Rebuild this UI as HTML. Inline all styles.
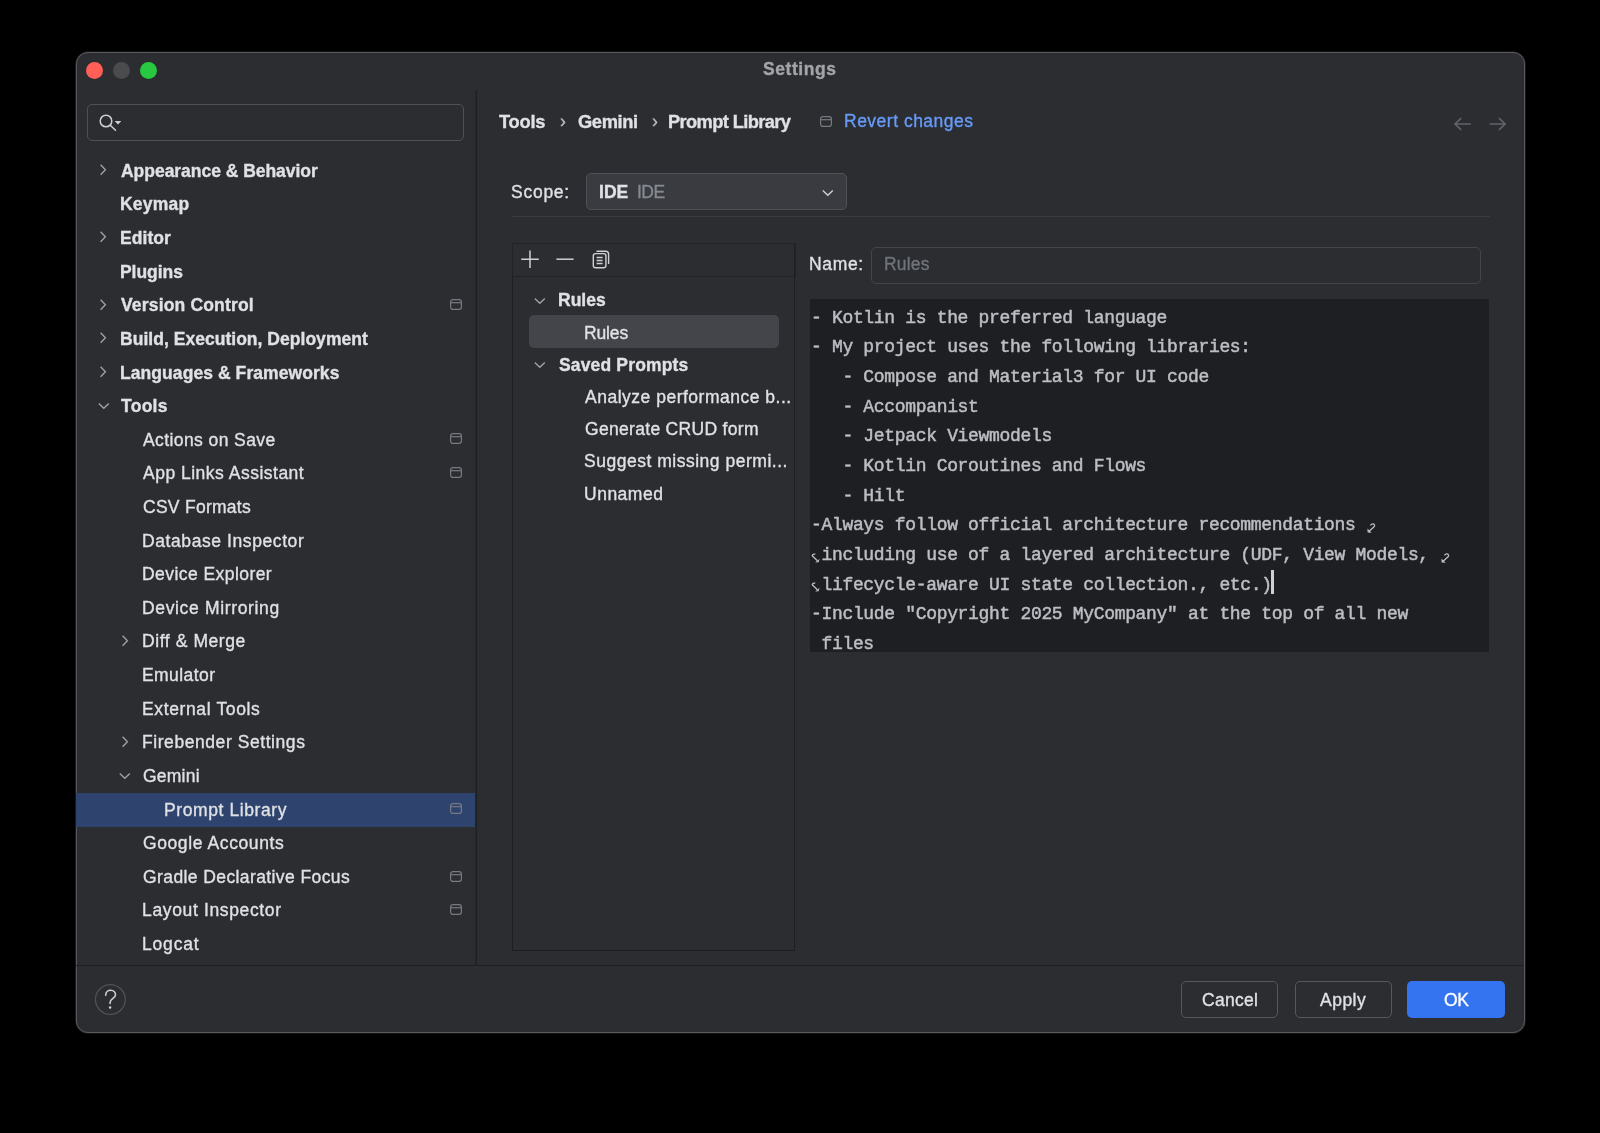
<!DOCTYPE html>
<html><head><meta charset="utf-8"><title>Settings</title>
<style>
html,body{margin:0;padding:0;}
body{width:1600px;height:1133px;background:#000;position:relative;overflow:hidden;font-family:'Liberation Sans', sans-serif;}
.b{position:absolute;box-sizing:border-box;}
.t{position:absolute;white-space:pre;-webkit-text-stroke:0.35px currentColor;will-change:transform;}
</style></head><body>

<div class="b" style="left:76px;top:52px;width:1449px;height:981px;background:#2B2D30;border:1px solid #58595C;border-radius:12px;box-shadow:0 0 0 0.6px rgba(88,89,92,0.45);"></div>
<div class="b" style="left:86.0px;top:61.5px;width:17px;height:17px;border-radius:50%;background:#FF5F57;"></div>
<div class="b" style="left:113.0px;top:61.5px;width:17px;height:17px;border-radius:50%;background:#4A4B4D;"></div>
<div class="b" style="left:140.0px;top:61.5px;width:17px;height:17px;border-radius:50%;background:#28C840;"></div>
<div class="t" style="left:763.00px;top:60.69px;font-size:17.5px;line-height:17.5px;font-weight:bold;color:#A3A4A7;letter-spacing:0.559px;font-family:'Liberation Sans', sans-serif;">Settings</div>
<div class="b" style="left:475px;top:90px;width:1px;height:875px;background:#26272A;"></div>
<div class="b" style="left:476px;top:90px;width:1px;height:875px;background:#1E1F22;"></div>
<div class="b" style="left:76px;top:965px;width:1448px;height:1px;background:#1E1F22;"></div>
<div class="b" style="left:87px;top:104px;width:377px;height:37px;border:1px solid #4E5157;border-radius:5px;"></div>
<svg class="b" style="left:96px;top:110px" width="30" height="24" viewBox="0 0 30 24"><circle cx="10" cy="11" r="5.8" fill="none" stroke="#CED0D6" stroke-width="1.5"/><line x1="14.2" y1="15.2" x2="19.5" y2="20.3" stroke="#CED0D6" stroke-width="1.5" stroke-linecap="round"/><path d="M18.7 11 L25.3 11 L22 14.4 Z" fill="#CED0D6"/></svg>
<svg class="b" style="left:96.7px;top:164.2px" width="12" height="12" viewBox="0 0 12 12"><path d="M3.6 0.8 L8.4 5.8 L3.6 10.8" fill="none" stroke="#9DA0A8" stroke-width="1.4"/></svg>
<div class="t" style="left:121.00px;top:162.79px;font-size:17.5px;line-height:17.5px;font-weight:bold;color:#DFE1E5;letter-spacing:-0.030px;font-family:'Liberation Sans', sans-serif;">Appearance &amp; Behavior</div>
<div class="t" style="left:120.00px;top:196.41px;font-size:17.5px;line-height:17.5px;font-weight:bold;color:#DFE1E5;letter-spacing:0.230px;font-family:'Liberation Sans', sans-serif;">Keymap</div>
<svg class="b" style="left:96.7px;top:231.43999999999997px" width="12" height="12" viewBox="0 0 12 12"><path d="M3.6 0.8 L8.4 5.8 L3.6 10.8" fill="none" stroke="#9DA0A8" stroke-width="1.4"/></svg>
<div class="t" style="left:120.00px;top:230.03px;font-size:17.5px;line-height:17.5px;font-weight:bold;color:#DFE1E5;letter-spacing:0.070px;font-family:'Liberation Sans', sans-serif;">Editor</div>
<div class="t" style="left:120.00px;top:263.65px;font-size:17.5px;line-height:17.5px;font-weight:bold;color:#DFE1E5;letter-spacing:-0.054px;font-family:'Liberation Sans', sans-serif;">Plugins</div>
<svg class="b" style="left:96.7px;top:298.68px" width="12" height="12" viewBox="0 0 12 12"><path d="M3.6 0.8 L8.4 5.8 L3.6 10.8" fill="none" stroke="#9DA0A8" stroke-width="1.4"/></svg>
<div class="t" style="left:121.00px;top:297.27px;font-size:17.5px;line-height:17.5px;font-weight:bold;color:#DFE1E5;letter-spacing:0.167px;font-family:'Liberation Sans', sans-serif;">Version Control</div>
<svg class="b" style="left:449.00px;top:297.98px" width="14" height="14" viewBox="0 0 14 14"><rect x="1.6" y="1.6" width="10.8" height="9.8" rx="2.3" fill="none" stroke="#767A81" stroke-width="1.2"/><line x1="1.6" y1="4.7" x2="12.4" y2="4.7" stroke="#767A81" stroke-width="1.2"/></svg>
<svg class="b" style="left:96.7px;top:332.3px" width="12" height="12" viewBox="0 0 12 12"><path d="M3.6 0.8 L8.4 5.8 L3.6 10.8" fill="none" stroke="#9DA0A8" stroke-width="1.4"/></svg>
<div class="t" style="left:120.00px;top:330.89px;font-size:17.5px;line-height:17.5px;font-weight:bold;color:#DFE1E5;letter-spacing:0.030px;font-family:'Liberation Sans', sans-serif;">Build, Execution, Deployment</div>
<svg class="b" style="left:96.7px;top:365.91999999999996px" width="12" height="12" viewBox="0 0 12 12"><path d="M3.6 0.8 L8.4 5.8 L3.6 10.8" fill="none" stroke="#9DA0A8" stroke-width="1.4"/></svg>
<div class="t" style="left:120.00px;top:364.51px;font-size:17.5px;line-height:17.5px;font-weight:bold;color:#DFE1E5;letter-spacing:0.073px;font-family:'Liberation Sans', sans-serif;">Languages &amp; Frameworks</div>
<svg class="b" style="left:97.5px;top:400.43999999999994px" width="12" height="12" viewBox="0 0 12 12"><path d="M0.8 3.4 L5.8 8.2 L10.8 3.4" fill="none" stroke="#9DA0A8" stroke-width="1.4"/></svg>
<div class="t" style="left:121.00px;top:398.13px;font-size:17.5px;line-height:17.5px;font-weight:bold;color:#DFE1E5;letter-spacing:0.280px;font-family:'Liberation Sans', sans-serif;">Tools</div>
<div class="t" style="left:143.00px;top:431.75px;font-size:17.5px;line-height:17.5px;font-weight:normal;color:#DFE1E5;letter-spacing:0.413px;font-family:'Liberation Sans', sans-serif;">Actions on Save</div>
<svg class="b" style="left:449.00px;top:432.46px" width="14" height="14" viewBox="0 0 14 14"><rect x="1.6" y="1.6" width="10.8" height="9.8" rx="2.3" fill="none" stroke="#767A81" stroke-width="1.2"/><line x1="1.6" y1="4.7" x2="12.4" y2="4.7" stroke="#767A81" stroke-width="1.2"/></svg>
<div class="t" style="left:143.40px;top:465.37px;font-size:17.5px;line-height:17.5px;font-weight:normal;color:#DFE1E5;letter-spacing:0.498px;font-family:'Liberation Sans', sans-serif;">App Links Assistant</div>
<svg class="b" style="left:449.00px;top:466.08px" width="14" height="14" viewBox="0 0 14 14"><rect x="1.6" y="1.6" width="10.8" height="9.8" rx="2.3" fill="none" stroke="#767A81" stroke-width="1.2"/><line x1="1.6" y1="4.7" x2="12.4" y2="4.7" stroke="#767A81" stroke-width="1.2"/></svg>
<div class="t" style="left:143.00px;top:498.99px;font-size:17.5px;line-height:17.5px;font-weight:normal;color:#DFE1E5;letter-spacing:0.270px;font-family:'Liberation Sans', sans-serif;">CSV Formats</div>
<div class="t" style="left:142.40px;top:532.61px;font-size:17.5px;line-height:17.5px;font-weight:normal;color:#DFE1E5;letter-spacing:0.589px;font-family:'Liberation Sans', sans-serif;">Database Inspector</div>
<div class="t" style="left:142.40px;top:566.23px;font-size:17.5px;line-height:17.5px;font-weight:normal;color:#DFE1E5;letter-spacing:0.441px;font-family:'Liberation Sans', sans-serif;">Device Explorer</div>
<div class="t" style="left:142.00px;top:599.85px;font-size:17.5px;line-height:17.5px;font-weight:normal;color:#DFE1E5;letter-spacing:0.654px;font-family:'Liberation Sans', sans-serif;">Device Mirroring</div>
<svg class="b" style="left:118.50000000000001px;top:634.88px" width="12" height="12" viewBox="0 0 12 12"><path d="M3.6 0.8 L8.4 5.8 L3.6 10.8" fill="none" stroke="#9DA0A8" stroke-width="1.4"/></svg>
<div class="t" style="left:142.40px;top:633.47px;font-size:17.5px;line-height:17.5px;font-weight:normal;color:#DFE1E5;letter-spacing:0.581px;font-family:'Liberation Sans', sans-serif;">Diff &amp; Merge</div>
<div class="t" style="left:142.00px;top:667.09px;font-size:17.5px;line-height:17.5px;font-weight:normal;color:#DFE1E5;letter-spacing:0.420px;font-family:'Liberation Sans', sans-serif;">Emulator</div>
<div class="t" style="left:142.00px;top:700.71px;font-size:17.5px;line-height:17.5px;font-weight:normal;color:#DFE1E5;letter-spacing:0.632px;font-family:'Liberation Sans', sans-serif;">External Tools</div>
<svg class="b" style="left:118.50000000000001px;top:735.74px" width="12" height="12" viewBox="0 0 12 12"><path d="M3.6 0.8 L8.4 5.8 L3.6 10.8" fill="none" stroke="#9DA0A8" stroke-width="1.4"/></svg>
<div class="t" style="left:142.40px;top:734.33px;font-size:17.5px;line-height:17.5px;font-weight:normal;color:#DFE1E5;letter-spacing:0.564px;font-family:'Liberation Sans', sans-serif;">Firebender Settings</div>
<svg class="b" style="left:119.30000000000001px;top:770.26px" width="12" height="12" viewBox="0 0 12 12"><path d="M0.8 3.4 L5.8 8.2 L10.8 3.4" fill="none" stroke="#9DA0A8" stroke-width="1.4"/></svg>
<div class="t" style="left:143.00px;top:767.95px;font-size:17.5px;line-height:17.5px;font-weight:normal;color:#DFE1E5;letter-spacing:0.220px;font-family:'Liberation Sans', sans-serif;">Gemini</div>
<div class="b" style="left:76px;top:793px;width:399px;height:34px;background:#2E436E;"></div>
<div class="t" style="left:164.00px;top:801.57px;font-size:17.5px;line-height:17.5px;font-weight:normal;color:#DFE1E5;letter-spacing:0.592px;font-family:'Liberation Sans', sans-serif;">Prompt Library</div>
<svg class="b" style="left:449.00px;top:802.28px" width="14" height="14" viewBox="0 0 14 14"><rect x="1.6" y="1.6" width="10.8" height="9.8" rx="2.3" fill="none" stroke="#767A81" stroke-width="1.2"/><line x1="1.6" y1="4.7" x2="12.4" y2="4.7" stroke="#767A81" stroke-width="1.2"/></svg>
<div class="t" style="left:143.40px;top:835.19px;font-size:17.5px;line-height:17.5px;font-weight:normal;color:#DFE1E5;letter-spacing:0.598px;font-family:'Liberation Sans', sans-serif;">Google Accounts</div>
<div class="t" style="left:143.00px;top:868.81px;font-size:17.5px;line-height:17.5px;font-weight:normal;color:#DFE1E5;letter-spacing:0.402px;font-family:'Liberation Sans', sans-serif;">Gradle Declarative Focus</div>
<svg class="b" style="left:449.00px;top:869.52px" width="14" height="14" viewBox="0 0 14 14"><rect x="1.6" y="1.6" width="10.8" height="9.8" rx="2.3" fill="none" stroke="#767A81" stroke-width="1.2"/><line x1="1.6" y1="4.7" x2="12.4" y2="4.7" stroke="#767A81" stroke-width="1.2"/></svg>
<div class="t" style="left:142.00px;top:902.43px;font-size:17.5px;line-height:17.5px;font-weight:normal;color:#DFE1E5;letter-spacing:0.645px;font-family:'Liberation Sans', sans-serif;">Layout Inspector</div>
<svg class="b" style="left:449.00px;top:903.14px" width="14" height="14" viewBox="0 0 14 14"><rect x="1.6" y="1.6" width="10.8" height="9.8" rx="2.3" fill="none" stroke="#767A81" stroke-width="1.2"/><line x1="1.6" y1="4.7" x2="12.4" y2="4.7" stroke="#767A81" stroke-width="1.2"/></svg>
<div class="t" style="left:142.00px;top:936.05px;font-size:17.5px;line-height:17.5px;font-weight:normal;color:#DFE1E5;letter-spacing:0.820px;font-family:'Liberation Sans', sans-serif;">Logcat</div>
<div class="t" style="left:499.00px;top:112.91px;font-size:18.3px;line-height:18.3px;font-weight:bold;color:#DFE1E5;letter-spacing:-0.220px;font-family:'Liberation Sans', sans-serif;">Tools</div>
<div class="t" style="left:560.00px;top:113.19px;font-size:17.5px;line-height:17.5px;font-weight:normal;color:#B8BBC0;letter-spacing:0.000px;font-family:'Liberation Sans', sans-serif;">›</div>
<div class="t" style="left:578.00px;top:112.91px;font-size:18.3px;line-height:18.3px;font-weight:bold;color:#DFE1E5;letter-spacing:-0.370px;font-family:'Liberation Sans', sans-serif;">Gemini</div>
<div class="t" style="left:652.00px;top:113.19px;font-size:17.5px;line-height:17.5px;font-weight:normal;color:#B8BBC0;letter-spacing:0.000px;font-family:'Liberation Sans', sans-serif;">›</div>
<div class="t" style="left:668.00px;top:112.91px;font-size:18.3px;line-height:18.3px;font-weight:bold;color:#DFE1E5;letter-spacing:-0.623px;font-family:'Liberation Sans', sans-serif;">Prompt Library</div>
<svg class="b" style="left:819.00px;top:114.80px" width="14" height="14" viewBox="0 0 14 14"><rect x="1.6" y="1.6" width="10.8" height="9.8" rx="2.3" fill="none" stroke="#767A81" stroke-width="1.2"/><line x1="1.6" y1="4.7" x2="12.4" y2="4.7" stroke="#767A81" stroke-width="1.2"/></svg>
<div class="t" style="left:844.00px;top:113.39px;font-size:17.5px;line-height:17.5px;font-weight:normal;color:#689AF8;letter-spacing:0.497px;font-family:'Liberation Sans', sans-serif;">Revert changes</div>
<svg class="b" style="left:1445px;top:108px" width="70" height="30" viewBox="0 0 70 30"><path d="M10 16 H25.8 M16.2 10.2 L10 16 L16.2 21.8" fill="none" stroke="#606369" stroke-width="1.6"/><path d="M44.6 16 H60.2 M54 10.2 L60.2 16 L54 21.8" fill="none" stroke="#606369" stroke-width="1.6"/></svg>
<div class="t" style="left:511.00px;top:183.79px;font-size:17.5px;line-height:17.5px;font-weight:normal;color:#DFE1E5;letter-spacing:0.740px;font-family:'Liberation Sans', sans-serif;">Scope:</div>
<div class="b" style="left:586px;top:172.5px;width:261px;height:37px;background:#393B40;border:1px solid #4E5157;border-radius:5px;"></div>
<div class="t" style="left:598.60px;top:183.79px;font-size:17.5px;line-height:17.5px;font-weight:bold;color:#DFE1E5;letter-spacing:0.050px;font-family:'Liberation Sans', sans-serif;">IDE</div>
<div class="t" style="left:637.00px;top:183.79px;font-size:17.5px;line-height:17.5px;font-weight:normal;color:#868A91;letter-spacing:-0.525px;font-family:'Liberation Sans', sans-serif;">IDE</div>
<svg class="b" style="left:822.2px;top:187px" width="12" height="12" viewBox="0 0 12 12"><path d="M0.8 3.4 L5.8 8.2 L10.8 3.4" fill="none" stroke="#CED0D6" stroke-width="1.4"/></svg>
<div class="b" style="left:512px;top:215.5px;width:978px;height:1px;background:#393B40;"></div>
<div class="b" style="left:512px;top:243px;width:283px;height:708px;border:1px solid #1E1F22;"></div>
<div class="b" style="left:512px;top:243px;width:284px;height:34px;border:1px solid #222326;"></div>
<svg class="b" style="left:518px;top:247px" width="100" height="25" viewBox="0 0 100 25"><path d="M12 3.5 V21 M3.2 12.2 H20.8" stroke="#CED0D6" stroke-width="1.5"/><path d="M38.4 12.2 H55.6" stroke="#CED0D6" stroke-width="1.5"/><rect x="75.3" y="6.6" width="12.6" height="14.2" rx="2.2" fill="none" stroke="#CED0D6" stroke-width="1.4"/><path d="M78.5 4.3 H87.6 Q90.6 4.3 90.6 7.3 V17" fill="none" stroke="#CED0D6" stroke-width="1.4"/><path d="M78.6 10.5 H84.6 M78.6 13.5 H84.6 M78.6 16.5 H84.6" stroke="#CED0D6" stroke-width="1.3"/></svg>
<svg class="b" style="left:534px;top:294.7px" width="12" height="12" viewBox="0 0 12 12"><path d="M0.8 3.4 L5.8 8.2 L10.8 3.4" fill="none" stroke="#9DA0A8" stroke-width="1.4"/></svg>
<div class="t" style="left:558.00px;top:292.39px;font-size:17.5px;line-height:17.5px;font-weight:bold;color:#DFE1E5;letter-spacing:0.005px;font-family:'Liberation Sans', sans-serif;">Rules</div>
<div class="b" style="left:529px;top:315px;width:249.5px;height:32.5px;background:#43454A;border-radius:5px;"></div>
<div class="t" style="left:584.00px;top:324.59px;font-size:17.5px;line-height:17.5px;font-weight:normal;color:#DFE1E5;letter-spacing:-0.130px;font-family:'Liberation Sans', sans-serif;">Rules</div>
<svg class="b" style="left:534px;top:359.1px" width="12" height="12" viewBox="0 0 12 12"><path d="M0.8 3.4 L5.8 8.2 L10.8 3.4" fill="none" stroke="#9DA0A8" stroke-width="1.4"/></svg>
<div class="t" style="left:559.00px;top:356.79px;font-size:17.5px;line-height:17.5px;font-weight:bold;color:#DFE1E5;letter-spacing:0.155px;font-family:'Liberation Sans', sans-serif;">Saved Prompts</div>
<div class="t" style="left:585.00px;top:388.99px;font-size:17.5px;line-height:17.5px;font-weight:normal;color:#DFE1E5;letter-spacing:0.507px;font-family:'Liberation Sans', sans-serif;">Analyze performance b...</div>
<div class="t" style="left:585.00px;top:421.19px;font-size:17.5px;line-height:17.5px;font-weight:normal;color:#DFE1E5;letter-spacing:0.307px;font-family:'Liberation Sans', sans-serif;">Generate CRUD form</div>
<div class="t" style="left:584.00px;top:453.39px;font-size:17.5px;line-height:17.5px;font-weight:normal;color:#DFE1E5;letter-spacing:0.513px;font-family:'Liberation Sans', sans-serif;">Suggest missing permi...</div>
<div class="t" style="left:584.00px;top:485.59px;font-size:17.5px;line-height:17.5px;font-weight:normal;color:#DFE1E5;letter-spacing:0.503px;font-family:'Liberation Sans', sans-serif;">Unnamed</div>
<div class="t" style="left:809.00px;top:256.49px;font-size:17.5px;line-height:17.5px;font-weight:normal;color:#DFE1E5;letter-spacing:0.670px;font-family:'Liberation Sans', sans-serif;">Name:</div>
<div class="b" style="left:871px;top:246.5px;width:610px;height:37.5px;border:1px solid #43454A;border-radius:5px;"></div>
<div class="t" style="left:883.50px;top:256.49px;font-size:17.5px;line-height:17.5px;font-weight:normal;color:#6F737A;letter-spacing:0.200px;font-family:'Liberation Sans', sans-serif;">Rules</div>
<div class="b" style="left:809.5px;top:299px;width:679.5px;height:352.5px;background:#1E1F22;"></div>
<div class="t" style="left:810.50px;top:308.80px;font-size:18px;line-height:18px;font-weight:normal;color:#BCBEC4;letter-spacing:-0.330px;font-family:'Liberation Mono', monospace;-webkit-text-stroke:0.5px #BCBEC4;">- Kotlin is the preferred language</div>
<div class="t" style="left:810.50px;top:338.44px;font-size:18px;line-height:18px;font-weight:normal;color:#BCBEC4;letter-spacing:-0.330px;font-family:'Liberation Mono', monospace;-webkit-text-stroke:0.5px #BCBEC4;">- My project uses the following libraries:</div>
<div class="t" style="left:810.50px;top:368.08px;font-size:18px;line-height:18px;font-weight:normal;color:#BCBEC4;letter-spacing:-0.330px;font-family:'Liberation Mono', monospace;-webkit-text-stroke:0.5px #BCBEC4;">   - Compose and Material3 for UI code</div>
<div class="t" style="left:810.50px;top:397.72px;font-size:18px;line-height:18px;font-weight:normal;color:#BCBEC4;letter-spacing:-0.330px;font-family:'Liberation Mono', monospace;-webkit-text-stroke:0.5px #BCBEC4;">   - Accompanist</div>
<div class="t" style="left:810.50px;top:427.36px;font-size:18px;line-height:18px;font-weight:normal;color:#BCBEC4;letter-spacing:-0.330px;font-family:'Liberation Mono', monospace;-webkit-text-stroke:0.5px #BCBEC4;">   - Jetpack Viewmodels</div>
<div class="t" style="left:810.50px;top:457.00px;font-size:18px;line-height:18px;font-weight:normal;color:#BCBEC4;letter-spacing:-0.330px;font-family:'Liberation Mono', monospace;-webkit-text-stroke:0.5px #BCBEC4;">   - Kotlin Coroutines and Flows</div>
<div class="t" style="left:810.50px;top:486.64px;font-size:18px;line-height:18px;font-weight:normal;color:#BCBEC4;letter-spacing:-0.330px;font-family:'Liberation Mono', monospace;-webkit-text-stroke:0.5px #BCBEC4;">   - Hilt</div>
<div class="t" style="left:810.50px;top:516.28px;font-size:18px;line-height:18px;font-weight:normal;color:#BCBEC4;letter-spacing:-0.330px;font-family:'Liberation Mono', monospace;-webkit-text-stroke:0.5px #BCBEC4;">-Always follow official architecture recommendations</div>
<div class="t" style="left:810.50px;top:545.92px;font-size:18px;line-height:18px;font-weight:normal;color:#BCBEC4;letter-spacing:-0.330px;font-family:'Liberation Mono', monospace;-webkit-text-stroke:0.5px #BCBEC4;"> including use of a layered architecture (UDF, View Models,</div>
<div class="t" style="left:810.50px;top:575.56px;font-size:18px;line-height:18px;font-weight:normal;color:#BCBEC4;letter-spacing:-0.330px;font-family:'Liberation Mono', monospace;-webkit-text-stroke:0.5px #BCBEC4;"> lifecycle-aware UI state collection., etc.)</div>
<div class="t" style="left:810.50px;top:605.20px;font-size:18px;line-height:18px;font-weight:normal;color:#BCBEC4;letter-spacing:-0.330px;font-family:'Liberation Mono', monospace;-webkit-text-stroke:0.5px #BCBEC4;">-Include "Copyright 2025 MyCompany" at the top of all new</div>
<div class="t" style="left:810.50px;top:634.84px;font-size:18px;line-height:18px;font-weight:normal;color:#BCBEC4;letter-spacing:-0.330px;font-family:'Liberation Mono', monospace;-webkit-text-stroke:0.5px #BCBEC4;"> files</div>
<svg class="b" style="left:1365.4px;top:522.1px" width="12" height="12" viewBox="0 0 12 12"><path d="M5.4 3.4 Q7 1.2 9 2.2 Q10.3 3.3 9.1 4.8 L3.8 9.6" fill="none" stroke="#BCBEC4" stroke-width="1.3"/><path d="M2.4 6.4 L2.6 10.6 L6.7 10.8 Z" fill="#BCBEC4"/></svg>
<svg class="b" style="left:810.5px;top:551.7px" width="12" height="12" viewBox="0 0 12 12"><path d="M4.3 2.2 Q1.6 1.6 1.2 3.8 L6.4 8.8" fill="none" stroke="#BCBEC4" stroke-width="1.3"/><path d="M7.6 10.3 L8.6 6.7 L4.2 10.4 Z" fill="#BCBEC4"/></svg>
<svg class="b" style="left:1438.7px;top:551.7px" width="12" height="12" viewBox="0 0 12 12"><path d="M5.4 3.4 Q7 1.2 9 2.2 Q10.3 3.3 9.1 4.8 L3.8 9.6" fill="none" stroke="#BCBEC4" stroke-width="1.3"/><path d="M2.4 6.4 L2.6 10.6 L6.7 10.8 Z" fill="#BCBEC4"/></svg>
<svg class="b" style="left:810.5px;top:581.4px" width="12" height="12" viewBox="0 0 12 12"><path d="M4.3 2.2 Q1.6 1.6 1.2 3.8 L6.4 8.8" fill="none" stroke="#BCBEC4" stroke-width="1.3"/><path d="M7.6 10.3 L8.6 6.7 L4.2 10.4 Z" fill="#BCBEC4"/></svg>
<div class="b" style="left:1271px;top:570px;width:3px;height:24px;background:#CED0D6;"></div>
<svg class="b" style="left:85px;top:975px" width="50" height="50" viewBox="0 0 50 50"><circle cx="25.35" cy="24.5" r="14.9" fill="none" stroke="#4E5157" stroke-width="1.3"/><path d="M20.7 20.2 C20.7 17.1 23 15.3 25.7 15.3 C28.5 15.3 30.5 17.4 30.5 19.9 C30.5 22.9 25.1 24 25.1 27.3 V28.4" fill="none" stroke="#CED0D6" stroke-width="1.6" stroke-linecap="round"/><circle cx="25.1" cy="32.6" r="1.25" fill="#CED0D6"/></svg>
<div class="b" style="left:1181px;top:980.5px;width:97px;height:37.5px;border:1px solid #55585E;border-radius:5px;"></div>
<div class="t" style="left:1202.00px;top:991.99px;font-size:17.5px;line-height:17.5px;font-weight:normal;color:#DFE1E5;letter-spacing:0.300px;font-family:'Liberation Sans', sans-serif;">Cancel</div>
<div class="b" style="left:1294.5px;top:980.5px;width:97px;height:37.5px;border:1px solid #55585E;border-radius:5px;"></div>
<div class="t" style="left:1320.00px;top:991.99px;font-size:17.5px;line-height:17.5px;font-weight:normal;color:#DFE1E5;letter-spacing:0.495px;font-family:'Liberation Sans', sans-serif;">Apply</div>
<div class="b" style="left:1407px;top:980.5px;width:98px;height:37.5px;background:#3574F0;border-radius:5px;"></div>
<div class="t" style="left:1443.60px;top:991.99px;font-size:17.5px;line-height:17.5px;font-weight:normal;color:#FFFFFF;letter-spacing:-0.300px;font-family:'Liberation Sans', sans-serif;">OK</div>
</body></html>
